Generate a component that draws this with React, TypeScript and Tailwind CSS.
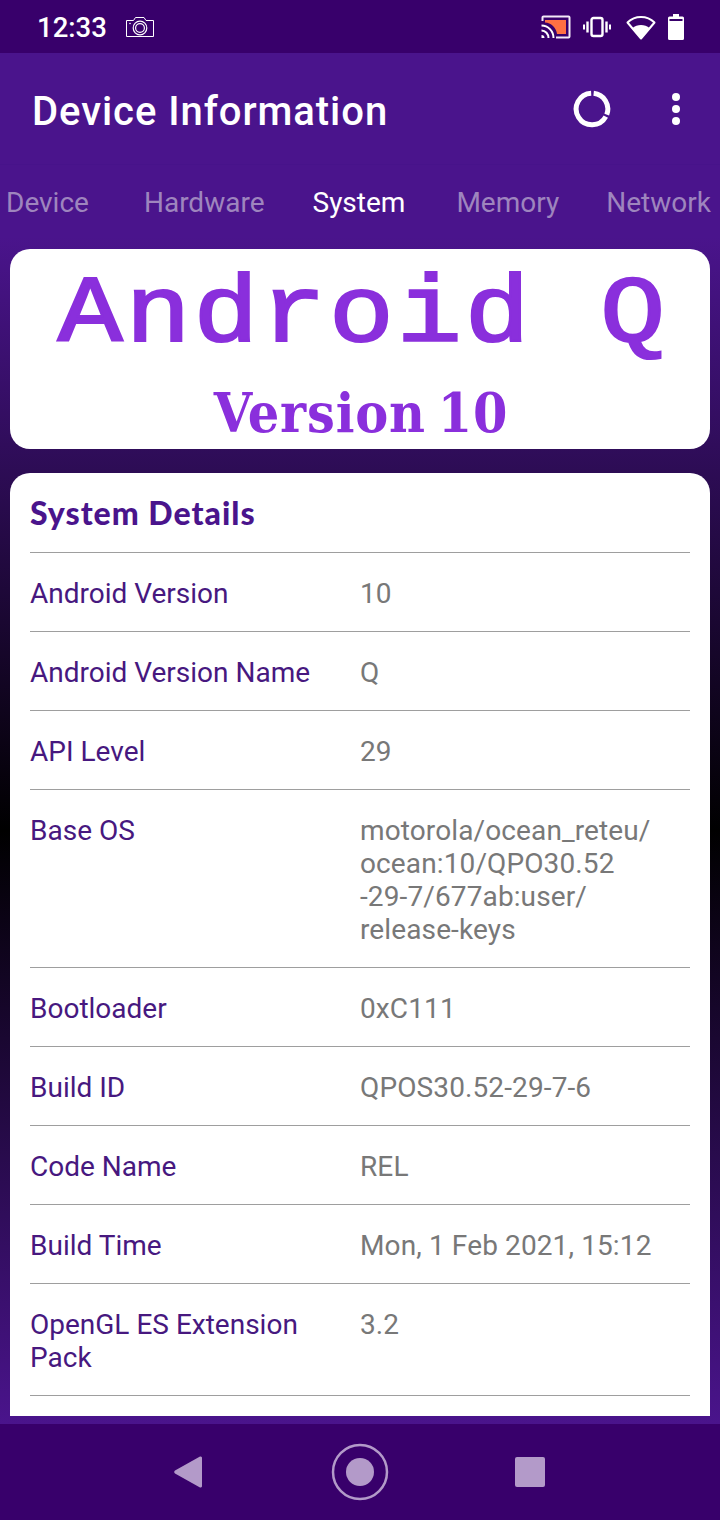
import React from "react";

const roboto = "font-['Roboto',sans-serif]";

function Row({ label, value }: { label: React.ReactNode; value: React.ReactNode }) {
  return (
    <div className="grid grid-cols-[330px_1fr] border-b border-[#9e9e9e] pt-[24px] pb-[21px] text-[28px] leading-[33px]">
      <div className="pr-[20px] text-[#47187f]">{label}</div>
      <div className="tracking-[0.12px] text-[#787878]">{value}</div>
    </div>
  );
}

function Camera() {
  return (
    <svg width="30" height="24" viewBox="0 0 30 24" fill="none" stroke="#fff" strokeWidth="1">
      <path d="M1.500 5.500H8.500L10.500 2.500H19L21 5.500H28.500V21.500H1.500Z" />
      <circle cx="15" cy="13" r="6.800" strokeWidth="1.200" />
      <circle cx="15" cy="13" r="4.400" strokeWidth="1.200" />
      <circle cx="5" cy="8.500" r="0.800" fill="#fff" stroke="none" />
    </svg>
  );
}

function Cast() {
  return (
    <svg width="30" height="24" viewBox="0 0 30 24" fill="none">
      <path d="M1.500 6V2.500A1 1 0 0 1 2.500 1.500H27.500A1 1 0 0 1 28.500 2.500V21.500A1 1 0 0 1 27.500 22.500H15" stroke="#f3e9f8" strokeWidth="2" />
      <path d="M4 5H25V19H16C15.500 13 10 7.500 4 7.500Z" fill="#ff7043" />
      <path d="M0.500 10.500C7 10.500 12.500 16 12.500 23" stroke="#fff" strokeWidth="2" />
      <path d="M0.500 15.500C4.500 15.500 7.500 19 7.500 23" stroke="#fff" strokeWidth="2" />
      <path d="M0.500 20A3 3 0 0 1 3.500 23H0.500Z" fill="#fff" />
    </svg>
  );
}

function Vibrate() {
  return (
    <svg width="28" height="24" viewBox="0 0 28 24" fill="none" stroke="#fff">
      <rect x="8.500" y="3" width="11" height="18" rx="2" strokeWidth="2.400" />
      <path d="M4.500 6.500V17.500M23.500 6.500V17.500" strokeWidth="2.400" />
      <path d="M1 9.500V14.500M27 9.500V14.500" strokeWidth="2" />
    </svg>
  );
}

function Wifi() {
  return (
    <svg width="30" height="26" viewBox="0 0 30 26" fill="none">
      <path d="M15 24.500L1.500 8.500C9 1 21 1 28.500 8.500Z" stroke="#fff" strokeWidth="2" strokeLinejoin="round" />
      <path d="M15 24.500L6.500 14C11 10 19 10 23.500 14Z" fill="#fff" />
    </svg>
  );
}

function Battery() {
  return (
    <svg width="16" height="26" viewBox="0 0 16 26">
      <path d="M5 0H11V2.500H14.500A1.500 1.500 0 0 1 16 4V24.500A1.500 1.500 0 0 1 14.500 26H1.500A1.500 1.500 0 0 1 0 24.500V4A1.500 1.500 0 0 1 1.500 2.500H5Z" fill="#fff" />
      <rect x="1.500" y="5" width="13" height="2" fill="#38006b" />
    </svg>
  );
}

function Donut() {
  return (
    <svg width="38" height="38" viewBox="0 0 38 38" fill="none" stroke="#fff" strokeWidth="5">
      <path d="M20.650 3.290A15.800 15.800 0 0 1 33.750 24.660" />
      <path d="M32.820 26.660A15.800 15.800 0 1 1 18.170 3.220" />
    </svg>
  );
}

function Dots() {
  return (
    <svg width="12" height="34" viewBox="0 0 12 34" fill="#fff">
      <circle cx="6" cy="5" r="4" />
      <circle cx="6" cy="17" r="4" />
      <circle cx="6" cy="29" r="4" />
    </svg>
  );
}

export default function App() {
  return (
    <div className={`flex h-[1520px] w-[720px] flex-col overflow-hidden bg-[#38006b] ${roboto}`}>
      <div className="flex h-[53px] shrink-0 items-center bg-[#38006b] pl-[37px] pr-[36px] text-white">
        <span className="mt-[2px] text-[27.5px] font-medium leading-none">12:33</span>
        <span className="ml-[18px] flex"><Camera /></span>
        <div className="ml-auto flex items-center">
          <Cast />
          <span className="ml-[12px] flex"><Vibrate /></span>
          <span className="ml-[15px] flex"><Wifi /></span>
          <span className="ml-[12px] flex"><Battery /></span>
        </div>
      </div>

      <div className="flex h-[111px] shrink-0 items-center bg-[#4a148c] pl-[32px] pr-[38px]">
        <h1 className="mt-[6px] text-[40px] font-medium leading-none tracking-[0.95px] text-white">Device Information</h1>
        <div className="ml-auto flex items-center">
          <Donut />
          <span className="ml-[59px] flex"><Dots /></span>
        </div>
      </div>

      <div className="flex h-[73px] shrink-0 items-center whitespace-nowrap border-t border-[#47138a] bg-[#4a148c] pl-[6px] pt-[4px] text-[28px] leading-none text-[#9e85be]">
        <span>Device</span>
        <span className="ml-[55px]">Hardware</span>
        <span className="ml-[48px] text-white">System</span>
        <span className="ml-[51px]">Memory</span>
        <span className="ml-[47px]">Network</span>
      </div>

      <div className="flex min-h-0 flex-1 flex-col gap-6 bg-[linear-gradient(to_bottom,#4a148c,#000000_50%,#4a148c)] px-[10px] pb-2 pt-3">
        <div className="flex h-[200px] shrink-0 flex-col items-center rounded-[20px] bg-white text-[#8a2fdc]">
          <div className="ml-[6px] mt-[6px] origin-bottom scale-y-[0.87] font-['Liberation_Mono',monospace] text-[108px] leading-[108px] tracking-[3px] [-webkit-text-stroke:2.5px_#8a2fdc]">Android Q</div>
          <div className="ml-[2px] mt-[18px] font-['DejaVu_Serif_Condensed','DejaVu_Serif',serif] text-[55px] font-bold leading-[64px] tracking-[0.8px] [word-spacing:-6px]">Version 10</div>
        </div>

        <div className="min-h-0 flex-1 overflow-hidden rounded-t-[20px] bg-white px-5">
          <div className="border-b border-[#9e9e9e] pb-[23px] pt-[23px] font-['Lato',sans-serif] text-[32px] font-black leading-[33px] tracking-[1px] text-[#4a148c]">System Details</div>
          <Row label="Android Version" value="10" />
          <Row label="Android Version Name" value="Q" />
          <Row label="API Level" value="29" />
          <Row
            label="Base OS"
            value={<>motorola/ocean_reteu/<br />ocean:10/QPO30.52<br />-29-7/677ab:user/<br />release-keys</>}
          />
          <Row label="Bootloader" value="0xC111" />
          <Row label="Build ID" value="QPOS30.52-29-7-6" />
          <Row label="Code Name" value="REL" />
          <Row label="Build Time" value="Mon, 1 Feb 2021, 15:12" />
          <Row label="OpenGL ES Extension Pack" value="3.2" />
        </div>
      </div>

      <div className="flex h-[96px] shrink-0 items-center justify-center bg-[#38006b] pr-[2px]">
        <svg width="28" height="34" viewBox="0 0 28 34" fill="#b39ac9">
          <path d="M26 1.500A1.500 1.500 0 0 1 28 3V31A1.500 1.500 0 0 1 26 32.500L1 18.500A1.800 1.800 0 0 1 1 15.500Z" />
        </svg>
        <svg className="ml-[129px]" width="58" height="58" viewBox="0 0 58 58" fill="none">
          <circle cx="29" cy="29" r="27" stroke="#b39ac9" strokeWidth="2.500" />
          <circle cx="29" cy="29" r="14" fill="#b39ac9" />
        </svg>
        <div className="ml-[126px] h-[30px] w-[30px] rounded-[2px] bg-[#b39ac9]" />
      </div>
    </div>
  );
}
